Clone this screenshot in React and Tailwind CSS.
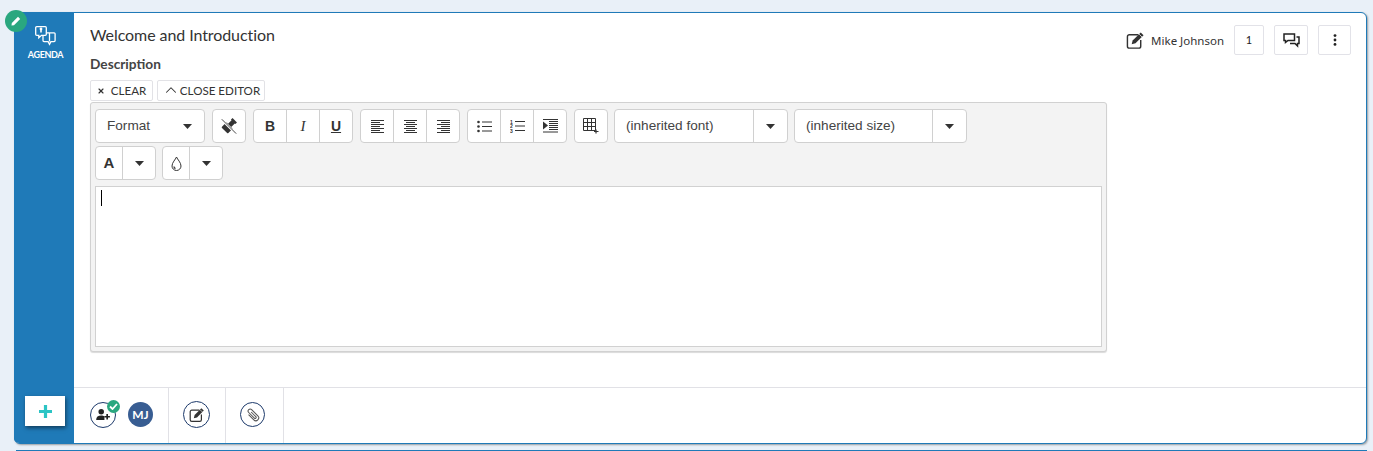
import React from 'react';
import { ChevronUp, X } from 'lucide-react';

const Caret = () => (
  <svg width="9" height="5" viewBox="0 0 9 5" className="text-[#333]">
    <path d="M0 0h9L4.500 5z" fill="currentColor" />
  </svg>
);

const ToolBtn = ({ children, className = '' }) => (
  <div className={`h-full flex-1 flex items-center justify-center text-[#333] ${className}`}>{children}</div>
);

const Group = ({ children, className = '' }) => (
  <div className={`h-[34px] flex bg-white border border-[#d0d0d0] rounded-[4px] divide-x divide-[#d0d0d0] ${className}`}>
    {children}
  </div>
);

const SelectBox = ({ label, width }) => (
  <Group className={width}>
    <div className="flex-1 pl-[11px] flex items-center text-[13.600px] text-[#444]">{label}</div>
    <div className="w-[33px] flex items-center justify-center"><Caret /></div>
  </Group>
);

// align icons: long and short lines, 2px apart
const AlignIcon = ({ side }) => {
  const rows = [13, 9, 13, 9, 13, 9, 13];
  return (
    <svg width="13" height="13" viewBox="0 0 13 13" stroke="#333" strokeWidth="1">
      {rows.map((len, i) => {
        let x = 0;
        if (side === 'center') x = (13 - len) / 2;
        if (side === 'right') x = 13 - len;
        return <path key={i} d={`M${x} ${i * 2 + 0.5}h${len}`} />;
      })}
    </svg>
  );
};

const BulletIcon = () => (
  <svg width="15" height="13" viewBox="0 0 15 13">
    <circle cx="1.500" cy="2" r="1.300" fill="#333" />
    <circle cx="1.500" cy="6.500" r="1.300" fill="#333" />
    <circle cx="1.500" cy="11" r="1.300" fill="#333" />
    <path d="M5 2h10M5 6.500h10M5 11h10" stroke="#333" strokeWidth="1" />
  </svg>
);

const NumberIcon = () => (
  <svg width="15" height="14" viewBox="0 0 15 14">
    <text x="0" y="4.500" fontSize="5" fontWeight="700" fill="#333" fontFamily="Liberation Sans">1</text>
    <text x="0" y="9" fontSize="5" fontWeight="700" fill="#333" fontFamily="Liberation Sans">2</text>
    <text x="0" y="13.500" fontSize="5" fontWeight="700" fill="#333" fontFamily="Liberation Sans">3</text>
    <path d="M5 2.500h10M5 7h10M5 11.500h10" stroke="#333" strokeWidth="1" />
  </svg>
);

const AgendaIcon = () => (
  <svg width="21" height="20" viewBox="0 0 21 20" fill="none" stroke="white" strokeWidth="1.300">
    <path d="M1.700 0.700h8.600a1 1 0 0 1 1 1v6.600a1 1 0 0 1-1 1H6.500L3.800 11.800V9.300H1.700a1 1 0 0 1-1-1V1.700a1 1 0 0 1 1-1z" />
    <path d="M11.300 6.800h7.800a1 1 0 0 1 1 1v6.800a1 1 0 0 1-1 1h-3.200l-1.400 2.800-1.400-2.800H9a1 1 0 0 1-1-1V9.300" />
    <path d="M14.500 7v8.500" />
    <circle cx="6" cy="3" r="1.400" fill="white" stroke="none" />
    <path d="M6 4v2.500" strokeWidth="1.600" />
  </svg>
);

const PaintIcon = () => (
  <svg width="18" height="18" viewBox="0 0 20 20" className="text-[#333]">
    <g transform="rotate(45 10 10)" fill="currentColor">
      <rect x="5" y="9" width="10" height="8" rx="1" />
      <rect x="7.500" y="3" width="5" height="6" />
      <rect x="6.500" y="1" width="7" height="2.500" />
    </g>
    <path d="M2 3l15 15" stroke="#fff" strokeWidth="2.600" />
    <path d="M2 2.500l16 16" stroke="currentColor" strokeWidth="1" />
  </svg>
);

const IndentIcon = () => (
  <svg width="15" height="14" viewBox="0 0 15 14" className="text-[#333]">
    <path d="M0 0.500h15M6 2.500h9M6 4.500h9M6 6.500h9M6 8.500h9M6 10.500h9M0 13h15" stroke="currentColor" strokeWidth="1" fill="none" />
    <path d="M0 2.500l5 4-5 4z" fill="currentColor" />
  </svg>
);

const TableIcon = () => (
  <svg width="16" height="16" viewBox="0 0 16 16" fill="none" stroke="#333" strokeWidth="1">
    <path d="M0.500 0.500h12v12h-12zM4.500 0.500v12M8.500 0.500v12M0.500 4.500h12M0.500 8.500h12" />
    <path d="M13 11.500v4M11 13.500h4.500" strokeWidth="1.200" />
  </svg>
);

const DropIcon = () => (
  <svg width="11" height="15" viewBox="0 0 11 15" fill="none" stroke="#333" strokeWidth="1">
    <path d="M5.500 1C4.500 3.500 1 6.500 1 10a4.500 4.500 0 0 0 9 0C10 6.500 6.500 3.500 5.500 1z" />
    <path d="M3 10.500c0 1 .7 1.800 1.500 2" strokeWidth="1.300" />
  </svg>
);

const EditIcon = ({ size = 20 }) => (
  <svg width={size} height={size} viewBox="0 0 20 20" fill="none">
    <path d="M13 4H3.500A2 2 0 0 0 1.500 6v10a2 2 0 0 0 2 2h10a2 2 0 0 0 2-2V9.500" stroke="#333" strokeWidth="1.500" />
    <path d="M15.500 1.500l3 3L10 13l-4 1 1-4z" fill="#333" />
    <path d="M13.800 3.300l3 3" stroke="#fff" strokeWidth="0.800" />
  </svg>
);

const ClipIcon = () => (
  <svg width="16" height="16" viewBox="0 0 14 14" fill="none" stroke="#555" strokeWidth="0.900">
    <g transform="rotate(-45 7 7)">
      <path d="M4.500 4v6.500a2.500 2.500 0 0 0 5 0V2.800a1.800 1.800 0 0 0-3.600 0v7a.7.700 0 0 0 1.800 0V4" />
    </g>
  </svg>
);

const ChatIcon = () => (
  <svg width="17" height="15" viewBox="0 0 17 15" fill="none" stroke="#222" strokeWidth="1.500">
    <path d="M1 1h10.500v6.500H5l-2.500 2V7.500H1z" />
    <path d="M13.500 4H16v6.500h-1.500V13l-2.500-2.500H7" />
  </svg>
);

const DotsIcon = () => (
  <svg width="4" height="12" viewBox="0 0 4 12" fill="#222">
    <circle cx="2" cy="1.600" r="1.400" />
    <circle cx="2" cy="6" r="1.400" />
    <circle cx="2" cy="10.400" r="1.400" />
  </svg>
);

const UserPlusIcon = () => (
  <svg width="15" height="11" viewBox="0 0 16 12" fill="#222">
    <circle cx="5.500" cy="3" r="3" />
    <path d="M0 12c0-3.500 2-5 5.500-5 1.500 0 2.500.3 3.500 1v4z" />
    <path d="M12 5.500v6M9 8.500h6" stroke="#222" strokeWidth="1.800" />
  </svg>
);

const FooterCircle = ({ children, className = 'w-[26px] h-[26px]' }) => (
  <div className={`rounded-full border border-[#1d3a6b] bg-white flex items-center justify-center ${className}`}>
    {children}
  </div>
);

const App = () => {
  return (
    <div className="w-[1373px] h-[451px] overflow-hidden bg-[#e9f0f8] pt-[12px] pl-[14px] pr-[6px] font-['Lato',sans-serif]">
      <div className="relative h-[432px] flex bg-white border border-[#1f7ab8] rounded-[6px] shadow-[1px_1px_2px_rgba(0,0,0,0.35)]">
        <div className="absolute -left-[10px] -top-[3px] w-[22px] h-[22px] rounded-full bg-[#2aa77f] flex items-center justify-center z-10">
          <svg width="10" height="10" viewBox="0 0 10 10" fill="white"><path d="M7 .8l2.200 2.200L3 9.200.5 9.500.8 7z" /></svg>
        </div>

        <div className="w-[60px] shrink-0 bg-[#1f7ab8] rounded-l-[5px] flex flex-col items-center -ml-px">
          <div className="mt-[13px] ml-[2px]"><AgendaIcon /></div>
          <div className="mt-[3px] ml-[3px] text-[9px] leading-[11px] font-bold text-white tracking-[-0.35px]">AGENDA</div>
          <div className="mt-auto mb-[17px] ml-[2px] w-[40px] h-[30px] bg-white shadow-[1px_2px_4px_rgba(0,0,0,0.5)] flex items-center justify-center">
            <svg width="13" height="13" viewBox="0 0 13 13" stroke="#2cc4c4" strokeWidth="3.200"><path d="M6.500 0v13M0 6.500h13" /></svg>
          </div>
        </div>

        <div className="flex-1 flex flex-col min-w-0">
          <div className="flex-1 flex justify-between pl-[16px] pr-[15px] pt-[12px]">
            <div className="w-[1017px]">
              <h1 className="text-[16px] leading-[20px] text-[#333] tracking-[-0.08px]">Welcome and Introduction</h1>
              <div className="mt-[11px] text-[13.700px] leading-[16px] font-bold text-[#444]">Description</div>
              <div className="mt-[8px] flex gap-[4px] h-[21px] text-[11.600px] text-[#333]">
                <div className="w-[63px] border border-[#e2e2e6] rounded-[2px] flex items-center justify-center gap-[6px]">
                  <X size={8} strokeWidth={3.500} />CLEAR
                </div>
                <div className="w-[108px] border border-[#e2e2e6] rounded-[2px] flex items-center justify-center">
                  <ChevronUp size={18} strokeWidth={1.400} className="-mt-px" />CLOSE EDITOR
                </div>
              </div>

              <div className="mt-[1px] h-[250px] bg-[#f3f3f3] border border-[#d1d1d1] rounded-[3px] shadow-[0_1px_1px_rgba(0,0,0,0.15)] px-[4px] pt-[6px] font-['Liberation_Sans',sans-serif]">
                <div className="flex gap-[7px]">
                  <div className="w-[110px] h-[34px] bg-white border border-[#d0d0d0] rounded-[4px] flex items-center justify-between pl-[11px] pr-[12px] text-[13.600px] text-[#444]">
                    Format<Caret />
                  </div>
                  <Group className="w-[34px]"><ToolBtn><PaintIcon /></ToolBtn></Group>
                  <Group className="w-[100px]">
                    <ToolBtn className="font-bold text-[14px]">B</ToolBtn>
                    <ToolBtn className="italic font-['Liberation_Serif',serif] text-[15px]">I</ToolBtn>
                    <ToolBtn className="font-bold text-[14px] underline">U</ToolBtn>
                  </Group>
                  <Group className="w-[100px]">
                    <ToolBtn><AlignIcon side="left" /></ToolBtn>
                    <ToolBtn><AlignIcon side="center" /></ToolBtn>
                    <ToolBtn><AlignIcon side="right" /></ToolBtn>
                  </Group>
                  <Group className="w-[100px]">
                    <ToolBtn><BulletIcon /></ToolBtn>
                    <ToolBtn><NumberIcon /></ToolBtn>
                    <ToolBtn><IndentIcon /></ToolBtn>
                  </Group>
                  <Group className="w-[34px]"><ToolBtn><TableIcon /></ToolBtn></Group>
                  <div className="-ml-px flex gap-[6px]">
                    <SelectBox label="(inherited font)" width="w-[174px]" />
                    <SelectBox label="(inherited size)" width="w-[173px]" />
                  </div>
                </div>

                <div className="mt-[3px] flex gap-[6px]">
                  <Group className="w-[61px]">
                    <div className="w-[27px] flex items-center justify-center font-bold text-[15px] text-[#333]">A</div>
                    <div className="flex-1 flex items-center justify-center"><Caret /></div>
                  </Group>
                  <Group className="w-[61px]">
                    <div className="w-[27px] flex items-center justify-center"><DropIcon /></div>
                    <div className="flex-1 flex items-center justify-center"><Caret /></div>
                  </Group>
                </div>

                <div className="mt-[6px] h-[161px] bg-white border border-[#d1d1d1] pl-[5px] pt-[3px]">
                  <div className="w-px h-[16px] bg-black" />
                </div>
              </div>
            </div>

            <div className="flex items-start">
              <div className="mt-[6px]"><EditIcon size={19} /></div>
              <div className="ml-[6px] mt-[8px] text-[11.500px] leading-[16px] text-[#333] font-['Noto_Sans',sans-serif]">Mike Johnson</div>
              <div className="ml-[10px] w-[30px] h-[30px] border border-[#e2e2e8] rounded-[2px] flex items-center justify-center text-[11px] text-[#222]">1</div>
              <div className="ml-[10px] w-[34px] h-[30px] border border-[#e2e2e8] rounded-[2px] flex items-center justify-center"><ChatIcon /></div>
              <div className="ml-[10px] w-[33px] h-[30px] border border-[#e2e2e8] rounded-[2px] flex items-center justify-center">
                <DotsIcon />
              </div>
            </div>
          </div>

          <div className="h-[56px] shrink-0 border-t border-[#e1e1e6] flex">
            <div className="w-[95px] border-r border-[#e1e1e6] flex items-center pl-[16px] pb-[2px]">
              <div className="relative">
                <FooterCircle><UserPlusIcon /></FooterCircle>
                <div className="absolute -right-[4px] -top-[2px] w-[13px] h-[13px] rounded-full bg-[#2aa77f] flex items-center justify-center">
                  <svg width="9" height="7" viewBox="0 0 9 7" fill="none" stroke="white" strokeWidth="1.800"><path d="M1 3.500l2.500 2.500L8 1" /></svg>
                </div>
              </div>
              <div className="ml-[12px] w-[25px] h-[25px] rounded-full bg-[#385d92] text-white text-[12px] font-bold flex items-center justify-center">MJ</div>
            </div>
            <div className="w-[57px] border-r border-[#e1e1e6] flex items-center justify-center pb-[2px] pr-[1px]">
              <FooterCircle className="w-[27px] h-[27px]"><EditIcon size={16} /></FooterCircle>
            </div>
            <div className="w-[58px] border-r border-[#e1e1e6] flex items-center justify-center pb-[2px] pr-[4px]">
              <FooterCircle className="w-[25px] h-[25px]"><ClipIcon /></FooterCircle>
            </div>
          </div>
        </div>
      </div>
      <div className="mt-[6px] ml-[2px] h-[4px] bg-white border-t-2 border-[#1f7ab8]" />
    </div>
  );
};

export default App;
